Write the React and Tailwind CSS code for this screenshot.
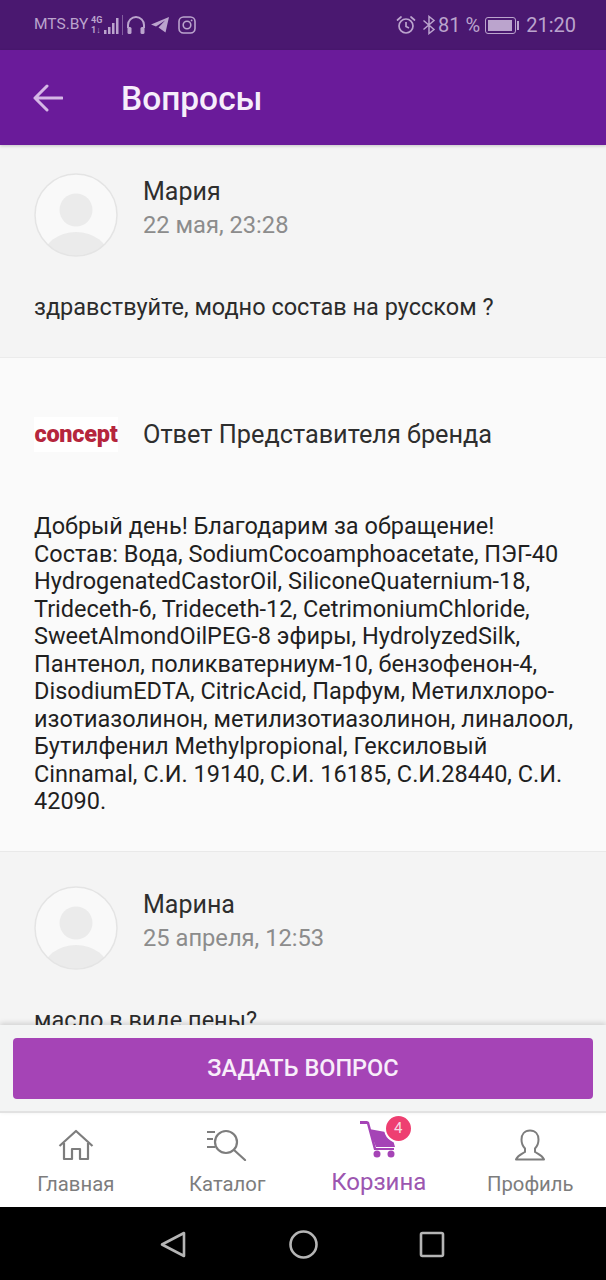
const answerLines = [
  "Добрый день! Благодарим за обращение!",
  "Состав: Вода, SodiumCocoamphoacetate, ПЭГ-40",
  "HydrogenatedCastorOil, SiliconeQuaternium-18,",
  "Trideceth-6, Trideceth-12, CetrimoniumChloride,",
  "SweetAlmondOilPEG-8 эфиры, HydrolyzedSilk,",
  "Пантенол, поликватерниум-10, бензофенон-4,",
  "DisodiumEDTA, CitricAcid, Парфум, Метилхлоро-",
  "изотиазолинон, метилизотиазолинон, линалоол,",
  "Бутилфенил Methylpropional, Гексиловый",
  "Cinnamal, C.И. 19140, C.И. 16185, C.И.28440, C.И.",
  "42090.",
];

function Avatar() {
  return (
    <svg width="84" height="84" viewBox="0 0 84 84" className="shrink-0">
      <defs>
        <clipPath id="avatarClip">
          <circle cx="42" cy="42" r="41" />
        </clipPath>
      </defs>
      <circle cx="42" cy="42" r="41" fill="#f9f9f9" />
      <g clipPath="url(#avatarClip)" fill="#ebebeb">
        <circle cx="42" cy="37" r="16.5" />
        <ellipse cx="42" cy="85" rx="33" ry="26" />
      </g>
      <circle cx="42" cy="42" r="41" fill="none" stroke="#e4e4e4" strokeWidth="1.5" />
    </svg>
  );
}

function Question({ name, date, text, className }) {
  return (
    <section className={`bg-[#f4f4f4] border-b border-[#ebebeb] px-[34px] ${className}`}>
      <div className="flex items-start gap-[25px]">
        <Avatar />
        <div className="pt-[3px]">
          <div className="text-[25px] leading-[32px] text-[#2e2e2e]">{name}</div>
          <div className="mt-[1px] text-[23.7px] leading-[32px] text-[#8c8c8c]">{date}</div>
        </div>
      </div>
      <p className="mt-[36px] text-[23.5px] leading-[28px] text-[#2b2b2b]">{text}</p>
    </section>
  );
}

function StatusBar() {
  return (
    <div className="h-[50px] shrink-0 bg-[#4a1870] flex items-center justify-between pl-[34px] pr-[30px] text-[#bba4cd]">
      <div className="flex items-center">
        <span className="text-[15.5px]">MTS.BY</span>
        <svg width="32" height="24" viewBox="0 0 32 24" className="ml-[3px]" fill="currentColor">
          <text x="0" y="10" fontSize="9" fontWeight="700" fontFamily="Roboto, sans-serif">4G</text>
          <text x="0" y="20" fontSize="9" fontWeight="700" fontFamily="Roboto, sans-serif">1↓</text>
          <rect x="13" y="17" width="2.5" height="4" />
          <rect x="17" y="14" width="2.5" height="7" />
          <rect x="21" y="10" width="2.5" height="11" />
          <rect x="25" y="5" width="2.5" height="16" />
          <rect x="31" y="2" width="1" height="20" opacity="0.5" />
        </svg>
        <svg width="22" height="22" viewBox="0 0 22 22" className="ml-[2px]" fill="none" stroke="currentColor" strokeWidth="2">
          <path d="M3 14V11a8 8 0 0 1 16 0v3" />
          <rect x="2.5" y="13" width="4" height="7" rx="1.5" fill="currentColor" stroke="none" />
          <rect x="15.5" y="13" width="4" height="7" rx="1.5" fill="currentColor" stroke="none" />
        </svg>
        <svg width="20" height="18" viewBox="0 0 20 18" className="ml-[3px]" fill="currentColor">
          <path d="M19 1 L1 8.5 L6 10.5 L15 4.5 L8.5 11.5 L15.5 16.5 Z" />
        </svg>
        <svg width="18" height="18" viewBox="0 0 18 18" className="ml-[8px]" fill="none" stroke="currentColor" strokeWidth="1.6">
          <rect x="1" y="1" width="16" height="16" rx="4.5" />
          <circle cx="9" cy="9" r="3.8" />
          <circle cx="13.6" cy="4.4" r="0.9" fill="currentColor" stroke="none" />
        </svg>
      </div>
      <div className="flex items-center">
        <svg width="20" height="20" viewBox="0 0 20 20" fill="none" stroke="currentColor" strokeWidth="1.7">
          <circle cx="10" cy="11" r="7" />
          <path d="M10 7v4.5l3 1.5" />
          <path d="M1.5 5 5 2M18.5 5 15 2" strokeLinecap="round" />
        </svg>
        <svg width="14" height="20" viewBox="0 0 14 20" className="ml-[6px]" fill="none" stroke="currentColor" strokeWidth="1.5">
          <path d="M1.5 5.5 12 14.5 7 18.5V1.5l5 4L1.5 14.5" />
        </svg>
        <span className="ml-[2px] text-[20px] leading-none">81 %</span>
        <div className="ml-[5px] flex items-center">
          <div className="w-[31px] h-[17px] border border-current rounded-[3px] p-[2px]">
            <div className="w-[24px] h-full bg-current" />
          </div>
          <div className="ml-[1px] w-[2px] h-[9px] bg-current" />
        </div>
        <span className="ml-[7px] text-[20px] leading-none">21:20</span>
      </div>
    </div>
  );
}

function NavItem({ label, labelClass = "mt-[11px] text-[20.3px] text-[#7d7d7d]", children }) {
  return (
    <div className="flex-1 flex flex-col items-center">
      <div className="h-[48px] flex items-end">{children}</div>
      <span className={`leading-[24px] ${labelClass}`}>{label}</span>
    </div>
  );
}

export default function App() {
  return (
    <div className="h-[1280px] w-[606px] flex flex-col overflow-hidden bg-[#f4f4f4] font-['Roboto',sans-serif]">
      <StatusBar />

      <header className="relative z-10 h-[95px] shrink-0 bg-[#6a1b9a] flex items-center pl-[33px] shadow-[0_1px_3px_rgba(0,0,0,0.2)]">
        <svg width="30" height="28" viewBox="0 0 30 28" fill="none" stroke="#d5b7e6" strokeWidth="3" strokeLinecap="round" strokeLinejoin="round">
          <path d="M14 2 2 14l12 12M2 14h27" />
        </svg>
        <h1 className="ml-[58px] pt-[3px] text-[33.5px] font-medium text-[#f6eefb]">Вопросы</h1>
      </header>

      <main className="flex-1 min-h-0 overflow-hidden">
        <Question name="Мария" date="22 мая, 23:28" text="здравствуйте, модно состав на русском ?" className="h-[213px] pt-[28px]" />

        <section className="h-[494px] bg-[#fafafa] border-b border-[#e9e9e9] px-[34px]">
          <div className="flex items-center gap-[25px] pt-[59px]">
            <div className="w-[84px] h-[35px] shrink-0 bg-white flex items-center justify-center">
              <span className="text-[23.5px] leading-none font-black tracking-[-0.3px] text-[#b5263c]">concept</span>
            </div>
            <span className="text-[25.3px] leading-[35px] text-[#2e2e2e]">Ответ Представителя бренда</span>
          </div>
          <div className="mt-[61px] text-[23.5px] leading-[27.5px] text-[#1f1f1f]">
            {answerLines.map((line) => (
              <div key={line} className="whitespace-nowrap">{line}</div>
            ))}
          </div>
        </section>

        <Question name="Марина" date="25 апреля, 12:53" text="масло в виде пены?" className="h-[300px] pt-[34px]" />
      </main>

      <div className="relative z-10 shrink-0 h-[88px] bg-[#f3f4f4] border-b-[2px] border-[#e2e2e2] px-[13px] pt-[13px] shadow-[0_-2px_5px_rgba(0,0,0,0.14)]">
        <button className="w-full h-[61px] rounded-[4px] bg-[#a544b6] text-[23.5px] font-medium text-[#f8eefa]">
          ЗАДАТЬ ВОПРОС
        </button>
      </div>

      <nav className="h-[94px] shrink-0 bg-white flex">
        <NavItem label="Главная">
          <svg width="36" height="32" viewBox="0 0 36 32" fill="none" stroke="#7d7d7d" strokeWidth="2.2" strokeLinejoin="round">
            <path d="M1.5 17 18 2l16.5 15" />
            <path d="M6 14v16h8V20h8v10h8V14" />
          </svg>
        </NavItem>
        <NavItem label="Каталог">
          <svg width="40" height="32" viewBox="0 0 40 32" fill="none" stroke="#7d7d7d" strokeWidth="2.2">
            <path d="M0 3h8M0 10h6M0 18h8" />
            <circle cx="19" cy="13" r="11" />
            <path d="M27 21l11 10" strokeLinecap="round" />
          </svg>
        </NavItem>
        <NavItem label="Корзина" labelClass="mt-[9px] text-[24px] text-[#9c56b0]">
          <div className="relative h-[48px] w-[36px]">
            <svg width="38" height="38" viewBox="0 0 38 38" className="absolute left-[-1px] top-[7px]" fill="#a544b6">
              <path d="M0 1h7l2 1 7 26h18v2H14L7 4H0Z" />
              <path d="M9 9l22 4 4 14H16Z" />
              <circle cx="17" cy="34" r="3.5" />
              <circle cx="31" cy="34" r="3.5" />
            </svg>
            <div className="absolute left-[25px] top-[3px] w-[25px] h-[25px] rounded-full bg-[#ee3f71] border-2 border-white box-content -m-[2px] flex items-center justify-center text-[15px] text-[#f6dce5]">
              4
            </div>
          </div>
        </NavItem>
        <NavItem label="Профиль">
          <svg width="32" height="32" viewBox="0 0 32 32" fill="none" stroke="#7d7d7d" strokeWidth="2" strokeLinejoin="round">
            <path d="M16 1.500c-5.500 0-8.500 4-8.500 9 0 4 1.500 7 3.500 9v3.500c-3 2-7 3-9 7.500h28c-2-4.500-6-5.500-9-7.500V19.500c2-2 3.500-5 3.500-9 0-5-3-9-8.500-9Z" />
          </svg>
        </NavItem>
      </nav>

      <div className="h-[73px] shrink-0 bg-black flex items-center justify-center">
        <svg width="300" height="32" viewBox="0 0 300 32" fill="none" stroke="#b5b5b5" strokeWidth="2.6" strokeLinejoin="round">
          <path d="M31 5v23L9 16.500Z" />
          <circle cx="150.500" cy="16.500" r="13" />
          <rect x="268" y="5" width="22" height="23" rx="1.500" />
        </svg>
      </div>
    </div>
  );
}
